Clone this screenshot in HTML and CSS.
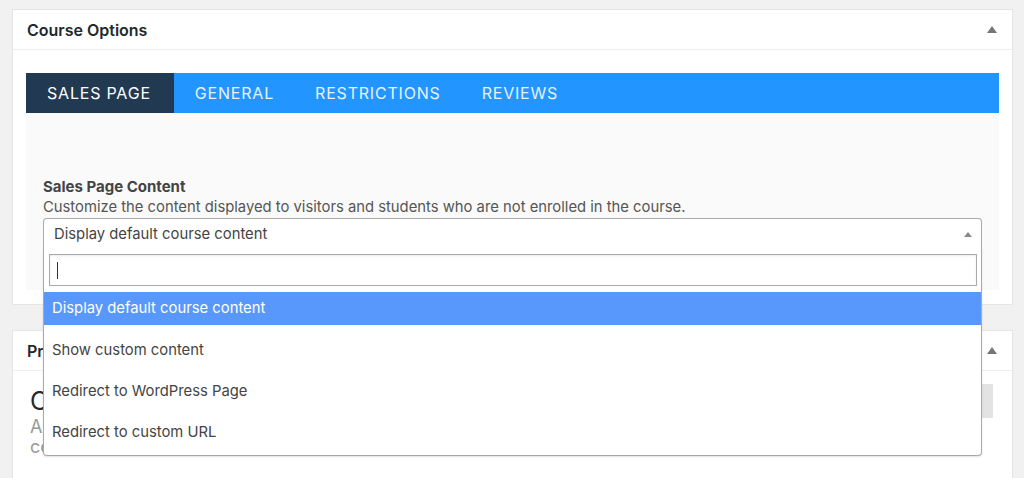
FILE: index.html
```html
<!DOCTYPE html>
<html lang="en">
<head>
    <meta charset="UTF-8">
    <title>Course Options</title>
    <link rel="stylesheet" href="styles.css">
</head>
<body>

<div class="wrap">

    <div class="postbox">
        <div class="postbox-header">
            <h2>Course Options</h2>
            <span class="toggle"></span>
        </div>
        <div class="inside">
            <ul class="tabs">
                <li class="active">Sales Page</li>
                <li>General</li>
                <li>Restrictions</li>
                <li>Reviews</li>
            </ul>
            <div class="tab-content">
                <div class="field">
                    <label>Sales Page Content</label>
                    <p class="desc">Customize the content displayed to visitors and students who are not enrolled in the course.</p>
                    <div class="select open">
                        <div class="select-current">
                            <span>Display default course content</span>
                            <span class="arrow"></span>
                        </div>
                        <div class="select-dropdown">
                            <div class="select-search">
                                <input type="text" value="">
                                <span class="caret"></span>
                            </div>
                            <ul class="results">
                                <li class="highlighted">Display default course content</li>
                                <li>Show custom content</li>
                                <li>Redirect to WordPress Page</li>
                                <li>Redirect to custom URL</li>
                            </ul>
                        </div>
                    </div>
                </div>
            </div>
        </div>
    </div>

    <div class="postbox tall">
        <div class="postbox-header">
            <h2>Product Options</h2>
            <span class="toggle"></span>
        </div>
        <div class="inside plans">
            <div class="plans-head">
                <div>
                    <h3>Course Access Plans</h3>
                    <p class="muted">Access plans define the price and enrollment options of this<br>course and can be edited at a later time.</p>
                </div>
                <button class="btn">Add Access Plan</button>
            </div>
        </div>
    </div>

</div>

</body>
</html>
```

FILE: styles.css
```css
body {
    margin: 0;
    background-color: #f1f1f1;
    font-family: Inter, "Noto Sans", sans-serif;
    color: #444;
}
ul, li {
    list-style: none;
    padding: 0;
    margin: 0;
}
.wrap {
    width: 1001px;
    padding: 9px 0 0 12px;
}
.postbox {
    background-color: #fff;
    border: 1px solid #e5e5e5;
    margin-bottom: 25px;
}
.postbox.tall {
    height: 200px;
}
.postbox-header {
    display: flex;
    align-items: center;
    justify-content: space-between;
    height: 39px;
    padding: 0 14px;
    border-bottom: 1px solid #eee;
}
.postbox-header h2 {
    margin: 0;
    font-size: 16px;
    font-weight: 600;
    color: #23282d;
}
.toggle {
    width: 0;
    height: 0;
    border-left: 5px solid transparent;
    border-right: 5px solid transparent;
    border-bottom: 7px solid #72777c;
    margin-right: 1px;
}
.inside {
    padding: 23px 13px 14px 13px;
}

/* tabs */
.tabs {
    display: flex;
    background-color: #2295ff;
    height: 40px;
}
.tabs li {
    display: flex;
    align-items: center;
    padding: 0 20px 0 21px;
    font-size: 16px;
    letter-spacing: 0.8px;
    text-transform: uppercase;
    color: #e6f2ff;
}
.tabs li.active {
    padding-right: 23px;
    background-color: #213a52;
    color: #fff;
}
.tab-content {
    background-color: #fafafa;
    padding: 64px 17px 40px 17px;
}

/* field */
.field label {
    display: block;
    font-size: 15px;
    font-weight: 700;
    color: #444;
    line-height: 20px;
}
.field .desc {
    margin: 0;
    font-size: 14.8px;
    line-height: 20px;
    color: #555;
}
.select {
    position: relative;
    margin-top: 1px;
}
.select-current {
    display: flex;
    align-items: center;
    justify-content: space-between;
    height: 30px;
    padding: 0 9px 0 10px;
    background-color: #fff;
    border: 1px solid #aaa;
    border-radius: 4px;
    font-size: 14.8px;
    color: #444;
}
.select.open .select-current {
    border-bottom-left-radius: 0;
    border-bottom-right-radius: 0;
    border-bottom-color: #ddd;
}
.arrow {
    width: 0;
    height: 0;
    border-left: 4px solid transparent;
    border-right: 4px solid transparent;
    border-bottom: 5px solid #888;
}
.select-dropdown {
    position: absolute;
    left: 0;
    right: 0;
    top: 31px;
    background-color: #fff;
    border: 1px solid #aaa;
    border-top: none;
    border-radius: 0 0 4px 4px;
    box-shadow: 0 1px 2px rgba(0, 0, 0, 0.12);
    z-index: 10;
}
.select-search {
    position: relative;
    padding: 5px 4px 5px 5px;
}
.select-search input {
    display: block;
    box-sizing: border-box;
    width: 100%;
    height: 32px;
    border: 1px solid #aaa;
    box-shadow: inset 0 1px 2px rgba(0, 0, 0, 0.08);
    outline: none;
    font-size: 14.8px;
}
.caret {
    position: absolute;
    left: 13px;
    top: 13px;
    width: 1px;
    height: 17px;
    background-color: #333;
}
.results li {
    height: 41px;
    padding: 16px 8px 0 8px;
    box-sizing: border-box;
    font-size: 14.8px;
    line-height: 18px;
    color: #444;
}
.results li.highlighted {
    height: 33px;
    padding-top: 7px;
    margin-top: 1px;
    background-color: #5897fb;
    color: #fff;
}
.results li:last-child {
    height: 48px;
}

/* second box */
.plans {
    padding: 14px 19px 13px 17px;
}
.plans-head {
    display: flex;
    justify-content: space-between;
    align-items: flex-start;
}
.plans-head h3 {
    margin: 0;
    font-size: 25px;
    font-weight: 400;
    line-height: 32px;
    color: #23282d;
}
.muted {
    margin: 0;
    font-size: 18px;
    line-height: 20px;
    color: #999;
}
.btn {
    margin-top: -1px;
    height: 34px;
    width: 150px;
    border: none;
    background-color: #e3e3e3;
    color: #555;
    font-family: inherit;
    font-size: 14px;
}
```
